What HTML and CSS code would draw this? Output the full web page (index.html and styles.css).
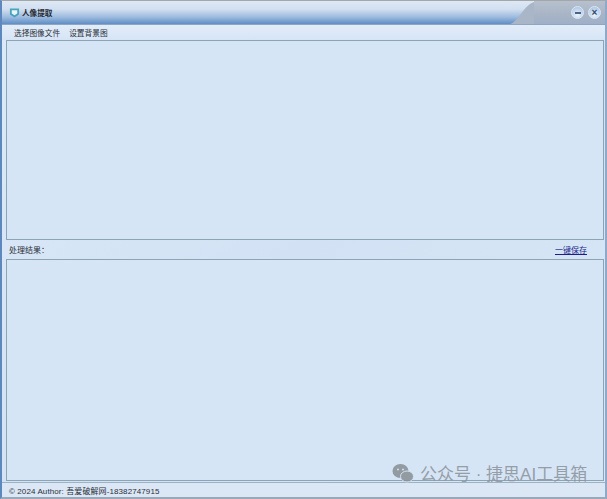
FILE: index.html
```html
<!DOCTYPE html>
<html lang="zh">
<head>
<meta charset="utf-8">
<title>人像提取</title>
<link rel="stylesheet" href="styles.css">
</head>
<body>
<div class="window">
  <header class="titlebar">
    <svg class="app-icon" viewBox="0 0 12 12" width="11" height="12"><path d="M1 1h10v6.500L6 11 1 7.500z" fill="#4aa3bd"/><path d="M3 3h6v3.500L6 8.500 3 6.500z" fill="#e8f6f8"/></svg>
    <span class="title">人像提取</span>
    <div class="caption">
      <svg class="slant" viewBox="0 0 24 24" preserveAspectRatio="none"><path d="M0 24C8 22 14 4 24 1V24z" fill="#a9b6c8"/></svg>
      <div class="caption-fill">
        <span class="cap-btn"><i class="minus"></i></span>
        <span class="cap-btn"><i class="close">×</i></span>
      </div>
    </div>
  </header>
  <nav class="menubar">
    <span class="menu-item">选择图像文件</span>
    <span class="menu-item">设置背景图</span>
  </nav>
  <main class="content">
    <section class="panel panel-top"></section>
    <div class="result-row">
      <span class="result-label">处理结果：</span>
      <a class="save-link">一键保存</a>
    </div>
    <section class="panel panel-bottom"></section>
  </main>
  <footer class="statusbar">© 2024 Author: 吾爱破解网-18382747915</footer>
</div>
<div class="watermark">
  <svg class="wechat" viewBox="0 0 22 20" width="22" height="20"><ellipse cx="8.500" cy="8" rx="8" ry="7" fill="#8b9299"/><ellipse cx="15" cy="13.500" rx="6.500" ry="5.500" fill="#8b9299" stroke="#d6e4f2"/><circle cx="6" cy="6.500" r="1" fill="#d6e4f2"/><circle cx="11" cy="6.500" r="1" fill="#d6e4f2"/></svg>
  <span>公众号 · 捷思AI工具箱</span>
</div>
</body>
</html>
```
FILE: styles.css
```css
* { box-sizing: border-box; }
html, body { margin: 0; height: 100%; }
body {
  position: relative;
  overflow: hidden;
  background: #d4e3f4;
  font-family: "Liberation Sans", "Noto Sans CJK SC", sans-serif;
  color: #2b3038;
}
.window {
  height: 499px;
  display: flex;
  flex-direction: column;
  border-top: 1px solid #a4a6a8;
  border-left: 2px solid #5d88bd;
  border-right: 2px solid #8fa9c8;
  border-bottom: 2px solid #9aa9ba;
  background: linear-gradient(135deg, #dce9f8, #d2e2f4 50%, #d9e7f6);
}
.titlebar {
  height: 24px;
  flex: none;
  display: flex;
  align-items: center;
  padding-left: 7px;
  background: linear-gradient(#dde8f5 0, #d3e0f0 35%, #9dbbdf 70%, #5f8ec4 100%);
  border-bottom: 1px solid #8da6c4;
}
.app-icon { flex: none; }
.title { margin-left: 2px; font-size: 7.600px; font-weight: 700; color: #1f2933; }
.caption {
  margin-left: auto;
  height: 23px;
  display: flex;
}
.slant { width: 24px; height: 23px; display: block; }
.caption-fill {
  width: 71px;
  background: linear-gradient(#b6c0ce, #a8b4c6 60%, #a0b0c8);
  display: flex;
  justify-content: flex-end;
  align-items: center;
  gap: 4px;
  padding-right: 4px;
}
.cap-btn {
  width: 13px;
  height: 13px;
  border-radius: 50%;
  display: flex;
  align-items: center;
  justify-content: center;
  background: radial-gradient(circle at 50% 70%, #eef5fc, #9dbce2);
  border: 1px solid #dbe7f5;
}
.minus { width: 6px; height: 2px; background: #4a6485; display: block; }
.close { font: 700 10px/1 "Liberation Sans", sans-serif; color: #2f4a6b; }
.menubar {
  height: 15px;
  flex: none;
  display: flex;
  align-items: center;
  gap: 9px;
  padding-left: 12px;
  font-size: 7.700px;
  background: linear-gradient(#e2edf9, #d6e4f5);
}
.content {
  flex: 1;
  min-height: 0;
  display: flex;
  flex-direction: column;
  padding: 0 1px 0 4px;
}
.panel {
  border: 1px solid #8aa6b4;
  background-color: #d6e5f6;
}
.panel-top { height: 200px; flex: none; }
.panel-bottom { flex: 1; min-height: 0; }
.result-row {
  height: 19px;
  flex: none;
  display: flex;
  align-items: center;
  justify-content: space-between;
  padding: 0 17px 0 3px;
  font-size: 8px;
}
.save-link { color: #1c1f8a; text-decoration: underline; }
.statusbar {
  height: 15px;
  flex: none;
  margin-top: 1px;
  display: flex;
  align-items: center;
  padding-left: 7px;
  font-size: 8px;
  letter-spacing: 0.1px;
  background: #dbe7f5;
  border-top: 1px solid #9fb2c4;
}
.watermark {
  position: absolute;
  left: 392px;
  top: 460px;
  display: flex;
  align-items: center;
  gap: 6px;
  font-size: 17px;
  color: #8f979f;
  opacity: 0.9;
  white-space: nowrap;
}
.wechat { flex: none; }
```
